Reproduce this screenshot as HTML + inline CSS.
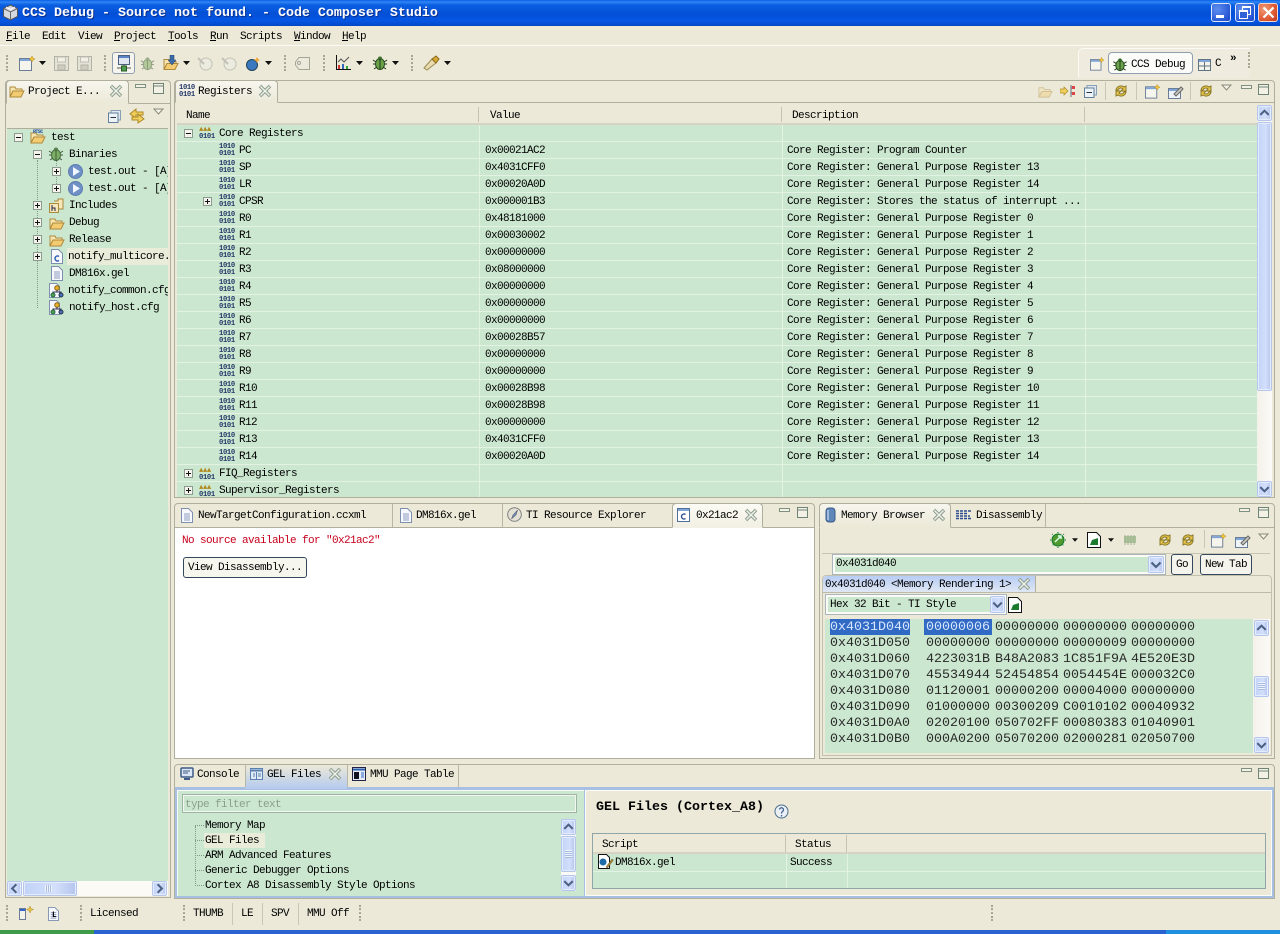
<!DOCTYPE html>
<html><head><meta charset="utf-8"><title>CCS Debug - Source not found. - Code Composer Studio</title>
<style>
html,body{margin:0;padding:0}
body{width:1280px;height:934px;position:relative;overflow:hidden;background:#ece9d8;font-family:"Liberation Mono","Noto Sans CJK SC",monospace;color:#000}
div,span,svg,b,i{position:absolute}
.t{white-space:pre;font-size:11px;line-height:14px;letter-spacing:-.6px;font-family:"Liberation Mono",monospace;margin-top:1px}
.t u{position:static}
.bin{font:bold 7.2px/6.500px "Liberation Mono",monospace;letter-spacing:-.35px;color:#26396a;white-space:pre;width:16px;height:13px;font-style:normal}
.r{left:177px;width:1080px;height:16px;background:#cbe7cf;border-bottom:1px solid #e3f2e3}
.p{border:1px solid #b0ae9c;border-radius:4px 4px 0 0;box-sizing:border-box;background:#ece9d8}
.g{background:#cbe7cf}
.grip{width:2px;border-left:2px dotted #a8a593}
.sb{background:linear-gradient(90deg,#c2d3f8,#d3dffb 60%,#b4c5ec);border:1px solid #b6c6ea;border-radius:2px;box-sizing:border-box;box-shadow:inset 0 0 0 1px #e4ecff}
.hex{white-space:pre;font-size:13.33px;line-height:16px;font-family:"Liberation Mono",monospace;color:#2a2a2a;margin-top:1px}
.tab{background:linear-gradient(#f7f6ee,#ece9d8);border:1px solid #b0ae9c;border-bottom:0;border-radius:4px 4px 0 0;box-sizing:border-box}
.sep{width:1px;background:#c9c6b3}
</style></head><body>
<svg width="0" height="0" style="left:0;top:0"><defs>
<symbol id="x" viewBox="0 0 14 14"><path d="M2 2l10 10M12 2L2 12" stroke="#8a9a8c" stroke-width="3.4" fill="none"/><path d="M2.5 2.5l9 9M11.5 2.500l-9 9" stroke="#eef2e8" stroke-width="1.5" fill="none"/></symbol>
<symbol id="min" viewBox="0 0 12 8"><rect x=".5" y="1.500" width="10" height="3" fill="#f3f1e6" stroke="#7f8f80"/></symbol>
<symbol id="max" viewBox="0 0 12 12"><rect x=".5" y=".5" width="10" height="10" fill="#f3f1e6" stroke="#6f8475"/><path d="M1 3h9" stroke="#6f8475"/></symbol>
<symbol id="menu" viewBox="0 0 12 8"><path d="M1 1h9L5.500 6z" fill="#f4f2e8" stroke="#8a8a78"/></symbol>
<symbol id="plus" viewBox="0 0 9 9"><rect x=".5" y=".5" width="8" height="8" fill="#f4f4ec" stroke="#8c9a90"/><path d="M2 4.500h5M4.500 2v5" stroke="#111"/></symbol>
<symbol id="minus" viewBox="0 0 9 9"><rect x=".5" y=".5" width="8" height="8" fill="#f4f4ec" stroke="#8c9a90"/><path d="M2 4.500h5" stroke="#111"/></symbol>
<symbol id="folder" viewBox="0 0 16 14"><path d="M1 3h5l1 2h6v2H4L1 13z" fill="#f7e5b0" stroke="#b08a3c"/><path d="M1 13l3-6h11l-3 6z" fill="#f3cb70" stroke="#b08a3c"/></symbol>
<symbol id="doc" viewBox="0 0 12 15"><path d="M.5.500h7l4 4v10H.5z" fill="#f8f9ff" stroke="#7d8fae"/><path d="M3 6h6M3 8h6M3 10h6M3 12h6" stroke="#8c9dbc"/></symbol>
<symbol id="cfg" viewBox="0 0 15 15"><path d="M.5.500h7l3 3v11H.5z" fill="#f8f9ff" stroke="#8090b0"/><circle cx="8" cy="5" r="2.300" fill="#e9b030" stroke="#8a6a10"/><path d="M8 7v2M4 11V9h8v2" stroke="#335" fill="none"/><circle cx="4" cy="12" r="2" fill="#50a050" stroke="#264"/><circle cx="12" cy="12" r="2" fill="#5070c0" stroke="#234"/></symbol>
<symbol id="play" viewBox="0 0 15 15"><circle cx="7.500" cy="7.500" r="7" fill="#6e90c6" stroke="#5d7cb0"/><path d="M5 3l7 4.500-7 4.500z" fill="#f0f4fc"/></symbol>
<symbol id="new" viewBox="0 0 17 15"><rect x=".5" y="2.500" width="12" height="12" fill="#f5f5ee" stroke="#6b7d96"/><path d="M1 3h11v2H1z" fill="#7fa4d6"/><path d="M13 0l1 2 2 1-2 1-1 2-1-2-2-1 2-1z" fill="#f1c63a" stroke="#b08a20" stroke-width=".5"/></symbol>
<symbol id="save" viewBox="0 0 15 15"><rect x=".5" y=".5" width="14" height="14" fill="#e4e2d4" stroke="#b3b2a6"/><rect x="3.500" y="1" width="8" height="5" fill="#f2f1e8" stroke="#c0bfb3"/><rect x="4" y="9" width="7" height="5" fill="#cfcdc0" stroke="#b3b2a6"/></symbol>
<symbol id="bug" viewBox="0 0 16 16"><ellipse cx="8" cy="9" rx="4.500" ry="5.500" fill="#6aa24a" stroke="#284c1e"/><circle cx="8" cy="3.500" r="2" fill="#3a6c2a"/><path d="M1 5l3 2M15 5l-3 2M1 9h3M15 9h-3M2 14l3-2M14 14l-3-2M8 4v10" stroke="#1e3a18"/></symbol>
<symbol id="sync" viewBox="0 0 16 16"><path d="M3 7a5 5 0 0 1 8-3l2-1v5H8l2-2a3 3 0 0 0-5 1z" fill="#e9c64a" stroke="#8c7a2a"/><path d="M13 9a5 5 0 0 1-8 3l-2 1V8h5l-2 2a3 3 0 0 0 5-1z" fill="#e9c64a" stroke="#8c7a2a"/></symbol>
<symbol id="swap" viewBox="0 0 16 16"><path d="M7 1L1 6l6 4V7h7V4H7z" fill="#f1cf5c" stroke="#ad8a26"/><path d="M9 6l6 5-6 4v-3H3V9h6z" fill="#f1cf5c" stroke="#ad8a26"/></symbol>
<symbol id="collapse" viewBox="0 0 13 13"><rect x="3" y=".5" width="9.500" height="9.500" fill="#dfe7f0" stroke="#88a0b4"/><rect x=".5" y="3" width="9.500" height="9.500" fill="#eef3f8" stroke="#5f7f9a"/><path d="M2.500 7.500h5.500" stroke="#234"/></symbol>
<symbol id="chip" viewBox="0 0 16 12"><rect x="2" y="2" width="12" height="7" fill="#4f8a3f"/><path d="M3 1v10M6 1v10M9 1v10M12 1v10" stroke="#2e5e24"/></symbol>
<symbol id="memdoc" viewBox="0 0 14 16"><path d="M.5.500h9l4 4v11H.5z" fill="#fff" stroke="#111"/><path d="M3 13l2-5 6-2v7z" fill="#1c7a2e"/></symbol>
<symbol id="up" viewBox="0 0 16 16"><path d="M3.500 10L8 5.500l4.500 4.500" fill="none" stroke="#4d6185" stroke-width="2.200"/></symbol>
<symbol id="dn" viewBox="0 0 16 16"><path d="M3.500 6L8 10.500 12.500 6" fill="none" stroke="#4d6185" stroke-width="2.200"/></symbol>
<symbol id="lf" viewBox="0 0 16 16"><path d="M10 3.500L5.500 8l4.500 4.500" fill="none" stroke="#4d6185" stroke-width="2.200"/></symbol>
<symbol id="rt" viewBox="0 0 16 16"><path d="M6 3.500L10.500 8 6 12.500" fill="none" stroke="#4d6185" stroke-width="2.200"/></symbol>
<symbol id="arr" viewBox="0 0 7 4"><path d="M0 0h7L3.500 4z" fill="#111"/></symbol>
<symbol id="persp" viewBox="0 0 15 14"><rect x=".5" y="2.500" width="12" height="11" fill="#f4f3ea" stroke="#5f7382"/><path d="M1 3h11v2H1z" fill="#7fa4d6"/><path d="M6.500 5v8M1 9h11" stroke="#5f7382"/></symbol>
<symbol id="pin" viewBox="0 0 16 15"><rect x=".5" y="4.500" width="12" height="10" fill="#eef3f8" stroke="#6b7d96"/><path d="M1 5h11v2H1z" fill="#7fa4d6"/><path d="M6 10l7-7 2 2-7 7z" fill="#c9c9c0" stroke="#666"/></symbol>
</defs></svg>

<!-- title bar -->
<div style="left:0;top:0;width:1280px;height:26px;background:linear-gradient(#0a5fe6 0,#2f86f5 2px,#0a5fe0 5px,#0450d8 14px,#0556e4 21px,#0347c4 26px)"></div>
<svg style="left:2px;top:4px" width="17" height="17" viewBox="0 0 17 17"><path d="M8.500 1l7 3.500v8l-7 3.500-7-3.500v-8z" fill="#d7d9e0" stroke="#555"/><path d="M1.500 4.500l7 3.500 7-3.500M8.500 8v8" stroke="#666" fill="none"/><path d="M4 3l4.500 2.500L13 3" stroke="#fff" fill="none"/></svg>
<div class="t" style="left:22px;top:5px;font:bold 13.33px/16px 'Liberation Mono',monospace;letter-spacing:0;color:#fff;text-shadow:1px 1px 0 #0a2f8c">CCS Debug - Source not found. - Code Composer Studio</div>
<div style="left:1211px;top:3px;width:20px;height:19px;border:1px solid #dce6fa;border-radius:3px;box-sizing:border-box;background:radial-gradient(circle at 30% 30%,#5f8ef0,#2a5bd6 70%,#1c48c0)"><b style="left:4px;top:11px;width:8px;height:3px;background:#fff"></b></div>
<div style="left:1235px;top:3px;width:20px;height:19px;border:1px solid #dce6fa;border-radius:3px;box-sizing:border-box;background:radial-gradient(circle at 30% 30%,#5f8ef0,#2a5bd6 70%,#1c48c0)"><b style="left:6px;top:2px;width:7px;height:6px;border:1px solid #fff;border-top-width:2px"></b><b style="left:3px;top:6px;width:7px;height:6px;border:1px solid #fff;border-top-width:2px;background:#2f62d8"></b></div>
<div style="left:1258px;top:3px;width:20px;height:19px;border:1px solid #f0d8d0;border-radius:3px;box-sizing:border-box;background:radial-gradient(circle at 30% 30%,#f09a78,#de5a32 60%,#c0381c)"><svg style="left:3px;top:2px" width="13" height="13" viewBox="0 0 13 13"><path d="M1.500 1.500l10 10M11.500 1.500l-10 10" stroke="#fff" stroke-width="2.200"/></svg></div>

<!-- menu -->
<div class="t" style="left:6px;top:29px"><u>F</u>ile</div>
<div class="t" style="left:42px;top:29px">Edit</div>
<div class="t" style="left:78px;top:29px">View</div>
<div class="t" style="left:114px;top:29px"><u>P</u>roject</div>
<div class="t" style="left:168px;top:29px"><u>T</u>ools</div>
<div class="t" style="left:210px;top:29px"><u>R</u>un</div>
<div class="t" style="left:240px;top:29px">Scripts</div>
<div class="t" style="left:294px;top:29px"><u>W</u>indow</div>
<div class="t" style="left:342px;top:29px"><u>H</u>elp</div>
<div style="left:0;top:45px;width:1280px;height:1px;background:#fbfaf4"></div>

<!-- main toolbar -->
<div class="grip" style="left:6px;top:55px;height:16px"></div>
<svg style="left:19px;top:56px" width="17" height="15"><use href="#new"/></svg>
<svg style="left:39px;top:61px" width="7" height="4"><use href="#arr"/></svg>
<svg style="left:54px;top:56px" width="15" height="15"><use href="#save"/></svg>
<svg style="left:77px;top:56px" width="15" height="15"><use href="#save"/></svg>
<div class="grip" style="left:104px;top:55px;height:16px"></div>
<div style="left:112px;top:52px;width:23px;height:22px;border:1px solid #8f9fb0;border-radius:3px;box-sizing:border-box;background:#f5f5ee"></div>
<svg style="left:117px;top:55px" width="14" height="17" viewBox="0 0 14 17"><rect x="1.500" y=".5" width="11" height="9" fill="#dfe6f2" stroke="#4a5f82"/><path d="M2 2h10" stroke="#5a84c4" stroke-width="2"/><path d="M7 9v3M0 13h14" stroke="#555"/><rect x="4.500" y="11" width="5" height="5" fill="#4f9a4f" stroke="#245a24"/></svg>
<svg style="left:140px;top:56px" width="15" height="15" opacity=".45"><use href="#bug"/></svg>
<svg style="left:163px;top:56px" width="16" height="15"><use href="#folder"/></svg>
<svg style="left:168px;top:55px" width="8" height="10" viewBox="0 0 8 10"><path d="M2 0h4v5h2L4 10 0 5h2z" fill="#3c6ca8" stroke="#1d3a66" stroke-width=".5"/></svg>
<svg style="left:183px;top:61px" width="7" height="4"><use href="#arr"/></svg>
<svg style="left:197px;top:56px" width="16" height="15" opacity=".4" viewBox="0 0 16 15"><circle cx="9" cy="8" r="6" fill="#eee" stroke="#888"/><path d="M1 2l6 6" stroke="#888" stroke-width="2"/></svg>
<svg style="left:221px;top:56px" width="16" height="15" opacity=".4" viewBox="0 0 16 15"><circle cx="9" cy="8" r="6" fill="#eee" stroke="#888"/><path d="M1 2l6 6" stroke="#888" stroke-width="2"/></svg>
<svg style="left:246px;top:56px" width="15" height="15" viewBox="0 0 15 15"><circle cx="6" cy="9" r="5.500" fill="#3a78c0" stroke="#245"/><path d="M11 1l1 2 2 1-2 1-1 2-1-2-2-1 2-1z" fill="#f1a83a"/></svg>
<svg style="left:265px;top:61px" width="7" height="4"><use href="#arr"/></svg>
<div class="grip" style="left:284px;top:55px;height:16px"></div>
<svg style="left:295px;top:57px" width="15" height="13" viewBox="0 0 15 13"><path d="M4 .5h10.500v12H4L.5 8V5z" fill="#eceadc" stroke="#a5a596"/><circle cx="4" cy="6" r="1.500" fill="none" stroke="#a5a596"/></svg>
<div class="grip" style="left:323px;top:55px;height:16px"></div>
<svg style="left:336px;top:55px" width="15" height="15" viewBox="0 0 15 15"><path d="M.5 0v14.500H15" fill="none" stroke="#111"/><path d="M2 7l3-3 3 3 5-5" fill="none" stroke="#555"/><path d="M3 10v4" stroke="#c33" stroke-width="2"/><path d="M7 9v5" stroke="#36b" stroke-width="2"/><path d="M11 11v3" stroke="#3a3" stroke-width="2"/></svg>
<svg style="left:356px;top:61px" width="7" height="4"><use href="#arr"/></svg>
<svg style="left:372px;top:55px" width="16" height="16"><use href="#bug"/></svg>
<svg style="left:392px;top:61px" width="7" height="4"><use href="#arr"/></svg>
<div class="grip" style="left:411px;top:55px;height:16px"></div>
<svg style="left:423px;top:55px" width="17" height="16" viewBox="0 0 17 16"><path d="M1 13l8-9 4 4-9 7z" fill="#e8dcb0" stroke="#9c8a50"/><path d="M9 4l4-3 3 3-3 4z" fill="#d8a838" stroke="#8a6a18"/></svg>
<svg style="left:444px;top:61px" width="7" height="4"><use href="#arr"/></svg>

<!-- perspective bar -->
<div style="left:1078px;top:48px;width:172px;height:30px;background:#efecdf;border-radius:5px 0 0 0;border-top:1px solid #fbfaf4;border-left:1px solid #fbfaf4;box-sizing:border-box"></div>
<svg style="left:1090px;top:57px" width="15" height="14"><use href="#new"/></svg>
<div style="left:1108px;top:52px;width:85px;height:22px;background:#fbfbf7;border:1px solid #8f9fb0;border-radius:4px;box-sizing:border-box"></div>
<svg style="left:1112px;top:57px" width="16" height="15"><use href="#bug"/></svg>
<div class="t" style="left:1131px;top:57px">CCS Debug</div>
<svg style="left:1198px;top:57px" width="15" height="14"><use href="#persp"/></svg>
<div class="t" style="left:1215px;top:56px">C</div>
<div class="t" style="left:1230px;top:51px;font-weight:bold">»</div>
<div class="grip" style="left:1248px;top:52px;height:16px"></div>

<!-- left panel -->
<div class="p" style="left:5px;top:80px;width:166px;height:818px"></div>
<div style="left:6px;top:103px;width:164px;height:1px;background:#b0ae9c"></div>
<div class="tab" style="left:6px;top:80px;width:123px;height:24px;border-bottom:1px solid #ece9d8"></div>
<svg style="left:9px;top:84px" width="16" height="14"><use href="#folder"/></svg>
<div class="t" style="left:28px;top:84px">Project E...</div>
<svg style="left:109px;top:84px" width="14" height="14"><use href="#x"/></svg>
<svg style="left:135px;top:83px" width="12" height="8"><use href="#min"/></svg>
<svg style="left:153px;top:83px" width="12" height="12"><use href="#max"/></svg>
<svg style="left:108px;top:110px" width="13" height="13"><use href="#collapse"/></svg>
<svg style="left:129px;top:108px" width="16" height="16"><use href="#swap"/></svg>
<svg style="left:153px;top:108px" width="12" height="8"><use href="#menu"/></svg>
<div style="left:7px;top:128px;width:161px;height:1px;background:#b0ae9b"></div>
<div class="g" style="left:7px;top:129px;width:161px;height:752px"></div>
<div style="left:37px;top:160px;height:148px;width:0;border-left:1px dotted #7f9a85"></div>
<div style="left:56px;top:160px;height:28px;width:0;border-left:1px dotted #7f9a85"></div>
<div style="left:67px;top:248px;width:101px;height:17px;background:#e9ecd9"></div>
<svg style="left:14px;top:133px" width="9" height="9"><use href="#minus"/></svg>
<svg style="left:30px;top:130px" width="16" height="14"><use href="#folder"/></svg>
<div class="t" style="left:33px;top:128px;font:bold 5px/6px 'Liberation Mono',monospace;color:#2b4f9f">RTSC</div>
<div class="t" style="left:51px;top:130px">test</div>
<svg style="left:33px;top:150px" width="9" height="9"><use href="#minus"/></svg>
<svg style="left:48px;top:146px" width="16" height="16" opacity=".8"><use href="#bug"/></svg>
<div class="t" style="left:69px;top:147px">Binaries</div>
<svg style="left:52px;top:167px" width="9" height="9"><use href="#plus"/></svg>
<svg style="left:68px;top:164px" width="15" height="15"><use href="#play"/></svg>
<div style="left:88px;top:164px;width:80px;height:16px;overflow:hidden"><span class="t" style="left:0;top:0">test.out - [A]</span></div>
<svg style="left:52px;top:184px" width="9" height="9"><use href="#plus"/></svg>
<svg style="left:68px;top:181px" width="15" height="15"><use href="#play"/></svg>
<div style="left:88px;top:181px;width:80px;height:16px;overflow:hidden"><span class="t" style="left:0;top:0">test.out - [A]</span></div>
<svg style="left:33px;top:201px" width="9" height="9"><use href="#plus"/></svg>
<svg style="left:49px;top:198px" width="15" height="15" viewBox="0 0 15 15"><path d="M5 3h4v-2h5v10h-4" fill="#f6e6b8" stroke="#a88a40"/><rect x=".5" y="5.500" width="9" height="9" fill="#f6e6b8" stroke="#a88a40"/><path d="M3 7v6M3 10h3v3" stroke="#224" fill="none"/></svg>
<div class="t" style="left:69px;top:198px">Includes</div>
<svg style="left:33px;top:218px" width="9" height="9"><use href="#plus"/></svg>
<svg style="left:49px;top:216px" width="16" height="14"><use href="#folder"/></svg>
<div class="t" style="left:69px;top:215px">Debug</div>
<svg style="left:33px;top:235px" width="9" height="9"><use href="#plus"/></svg>
<svg style="left:49px;top:233px" width="16" height="14"><use href="#folder"/></svg>
<div class="t" style="left:69px;top:232px">Release</div>
<svg style="left:33px;top:252px" width="9" height="9"><use href="#plus"/></svg>
<svg style="left:51px;top:249px" width="12" height="15" viewBox="0 0 12 15"><path d="M.5.500h7l4 4v10H.5z" fill="#f8f9ff" stroke="#7d8fae"/><path d="M8 7.500a2.500 2.500 0 1 0 0 4" fill="none" stroke="#2b5fae" stroke-width="1.500"/></svg>
<div style="left:68px;top:249px;width:100px;height:16px;overflow:hidden"><span class="t" style="left:0;top:0">notify_multicore.c</span></div>
<svg style="left:51px;top:266px" width="12" height="15"><use href="#doc"/></svg>
<div class="t" style="left:69px;top:266px">DM816x.gel</div>
<svg style="left:49px;top:283px" width="15" height="15"><use href="#cfg"/></svg>
<div style="left:68px;top:283px;width:100px;height:16px;overflow:hidden"><span class="t" style="left:0;top:0">notify_common.cfg</span></div>
<svg style="left:49px;top:300px" width="15" height="15"><use href="#cfg"/></svg>
<div class="t" style="left:69px;top:300px">notify_host.cfg</div>
<div style="left:7px;top:881px;width:161px;height:15px;background:#fbfaf7"></div>
<div class="sb" style="left:7px;top:881px;width:15px;height:15px"></div><svg style="left:7px;top:881px" width="15" height="15"><use href="#lf"/></svg>
<div class="sb" style="left:23px;top:881px;width:54px;height:15px"></div>
<div style="left:45px;top:885px;width:7px;height:7px;background:repeating-linear-gradient(90deg,#f0f4ff 0 1px,#a8bbe0 1px 2px)"></div>
<div class="sb" style="left:152px;top:881px;width:15px;height:15px"></div><svg style="left:152px;top:881px" width="15" height="15"><use href="#rt"/></svg>

<!-- registers panel -->
<div class="p" style="left:174px;top:80px;width:1101px;height:418px"></div>
<div style="left:175px;top:102px;width:1099px;height:1px;background:#b0ae9c"></div>
<div class="tab" style="left:175px;top:80px;width:103px;height:23px;border-bottom:1px solid #ece9d8"></div>
<i class="bin" style="left:179px;top:85px">1010
0101</i>
<div class="t" style="left:198px;top:84px">Registers</div>
<svg style="left:258px;top:84px" width="14" height="14"><use href="#x"/></svg>
<!-- reg toolbar -->
<svg style="left:1038px;top:84px" width="15" height="15" opacity=".4"><use href="#folder"/></svg>
<svg style="left:1060px;top:84px" width="16" height="14" viewBox="0 0 16 14"><path d="M0 5h4V3l4 4-4 4V9H0z" fill="#f1cf5c" stroke="#ad8a26" stroke-width=".7"/><path d="M11 1v12M11 4h4M11 9h4" stroke="#667"/><rect x="12" y="2" width="3" height="3" fill="#d44"/><rect x="12" y="8" width="3" height="3" fill="#d44"/></svg>
<svg style="left:1084px;top:85px" width="13" height="13"><use href="#collapse"/></svg>
<div class="sep" style="left:1105px;top:82px;height:18px"></div>
<svg style="left:1113px;top:83px" width="16" height="16"><use href="#sync"/></svg>
<div class="sep" style="left:1136px;top:82px;height:18px"></div>
<svg style="left:1145px;top:84px" width="16" height="15"><use href="#new"/></svg>
<svg style="left:1168px;top:84px" width="16" height="15"><use href="#pin"/></svg>
<div class="sep" style="left:1190px;top:82px;height:18px"></div>
<svg style="left:1198px;top:83px" width="16" height="16"><use href="#sync"/></svg>
<svg style="left:1221px;top:84px" width="12" height="8"><use href="#menu"/></svg>
<svg style="left:1241px;top:84px" width="12" height="8"><use href="#min"/></svg>
<svg style="left:1258px;top:84px" width="12" height="12"><use href="#max"/></svg>
<!-- reg header -->
<div style="left:177px;top:123px;width:1080px;height:2px;background:#d6d3c2"></div>
<div class="t" style="left:186px;top:108px">Name</div>
<div class="t" style="left:490px;top:108px">Value</div>
<div class="t" style="left:792px;top:108px">Description</div>
<div style="left:478px;top:107px;width:1px;height:15px;background:#c6c3b0"></div>
<div style="left:781px;top:107px;width:1px;height:15px;background:#c6c3b0"></div>
<div style="left:1084px;top:107px;width:1px;height:15px;background:#c6c3b0"></div>
<!-- rows -->
<div class="r" style="top:125px"></div><div class="r" style="top:142px"></div><div class="r" style="top:159px"></div><div class="r" style="top:176px"></div><div class="r" style="top:193px"></div><div class="r" style="top:210px"></div><div class="r" style="top:227px"></div><div class="r" style="top:244px"></div><div class="r" style="top:261px"></div><div class="r" style="top:278px"></div><div class="r" style="top:295px"></div><div class="r" style="top:312px"></div><div class="r" style="top:329px"></div><div class="r" style="top:346px"></div><div class="r" style="top:363px"></div><div class="r" style="top:380px"></div><div class="r" style="top:397px"></div><div class="r" style="top:414px"></div><div class="r" style="top:431px"></div><div class="r" style="top:448px"></div><div class="r" style="top:465px"></div><div class="r" style="top:482px;height:15px;border:0"></div>
<div style="left:479px;top:125px;width:1px;height:372px;background:#e3f2e3"></div>
<div style="left:782px;top:125px;width:1px;height:372px;background:#e3f2e3"></div>
<div style="left:1085px;top:125px;width:1px;height:372px;background:#e3f2e3"></div>

<svg style="left:184px;top:129px" width="9" height="9"><use href="#minus"/></svg>
<i class="bin" style="left:199px;top:127px;color:#26396a"><span style="position:static;color:#b08a20">&#9650;&#9650;&#9650;</span>
0101</i>
<div class="t" style="left:219px;top:126px">Core Registers</div>

<i class="bin" style="left:219px;top:144px">1010
0101</i><div class="t" style="left:239px;top:143px">PC</div><div class="t" style="left:485px;top:143px">0x00021AC2</div><div class="t" style="left:787px;top:143px">Core Register: Program Counter</div>
<i class="bin" style="left:219px;top:161px">1010
0101</i><div class="t" style="left:239px;top:160px">SP</div><div class="t" style="left:485px;top:160px">0x4031CFF0</div><div class="t" style="left:787px;top:160px">Core Register: General Purpose Register 13</div>
<i class="bin" style="left:219px;top:178px">1010
0101</i><div class="t" style="left:239px;top:177px">LR</div><div class="t" style="left:485px;top:177px">0x00020A0D</div><div class="t" style="left:787px;top:177px">Core Register: General Purpose Register 14</div>
<svg style="left:203px;top:197px" width="9" height="9"><use href="#plus"/></svg>
<i class="bin" style="left:219px;top:195px">1010
0101</i><div class="t" style="left:239px;top:194px">CPSR</div><div class="t" style="left:485px;top:194px">0x000001B3</div><div class="t" style="left:787px;top:194px">Core Register: Stores the status of interrupt ...</div>
<i class="bin" style="left:219px;top:212px">1010
0101</i><div class="t" style="left:239px;top:211px">R0</div><div class="t" style="left:485px;top:211px">0x48181000</div><div class="t" style="left:787px;top:211px">Core Register: General Purpose Register 0</div>
<i class="bin" style="left:219px;top:229px">1010
0101</i><div class="t" style="left:239px;top:228px">R1</div><div class="t" style="left:485px;top:228px">0x00030002</div><div class="t" style="left:787px;top:228px">Core Register: General Purpose Register 1</div>
<i class="bin" style="left:219px;top:246px">1010
0101</i><div class="t" style="left:239px;top:245px">R2</div><div class="t" style="left:485px;top:245px">0x00000000</div><div class="t" style="left:787px;top:245px">Core Register: General Purpose Register 2</div>
<i class="bin" style="left:219px;top:263px">1010
0101</i><div class="t" style="left:239px;top:262px">R3</div><div class="t" style="left:485px;top:262px">0x08000000</div><div class="t" style="left:787px;top:262px">Core Register: General Purpose Register 3</div>
<i class="bin" style="left:219px;top:280px">1010
0101</i><div class="t" style="left:239px;top:279px">R4</div><div class="t" style="left:485px;top:279px">0x00000000</div><div class="t" style="left:787px;top:279px">Core Register: General Purpose Register 4</div>
<i class="bin" style="left:219px;top:297px">1010
0101</i><div class="t" style="left:239px;top:296px">R5</div><div class="t" style="left:485px;top:296px">0x00000000</div><div class="t" style="left:787px;top:296px">Core Register: General Purpose Register 5</div>
<i class="bin" style="left:219px;top:314px">1010
0101</i><div class="t" style="left:239px;top:313px">R6</div><div class="t" style="left:485px;top:313px">0x00000000</div><div class="t" style="left:787px;top:313px">Core Register: General Purpose Register 6</div>
<i class="bin" style="left:219px;top:331px">1010
0101</i><div class="t" style="left:239px;top:330px">R7</div><div class="t" style="left:485px;top:330px">0x00028B57</div><div class="t" style="left:787px;top:330px">Core Register: General Purpose Register 7</div>
<i class="bin" style="left:219px;top:348px">1010
0101</i><div class="t" style="left:239px;top:347px">R8</div><div class="t" style="left:485px;top:347px">0x00000000</div><div class="t" style="left:787px;top:347px">Core Register: General Purpose Register 8</div>
<i class="bin" style="left:219px;top:365px">1010
0101</i><div class="t" style="left:239px;top:364px">R9</div><div class="t" style="left:485px;top:364px">0x00000000</div><div class="t" style="left:787px;top:364px">Core Register: General Purpose Register 9</div>
<i class="bin" style="left:219px;top:382px">1010
0101</i><div class="t" style="left:239px;top:381px">R10</div><div class="t" style="left:485px;top:381px">0x00028B98</div><div class="t" style="left:787px;top:381px">Core Register: General Purpose Register 10</div>
<i class="bin" style="left:219px;top:399px">1010
0101</i><div class="t" style="left:239px;top:398px">R11</div><div class="t" style="left:485px;top:398px">0x00028B98</div><div class="t" style="left:787px;top:398px">Core Register: General Purpose Register 11</div>
<i class="bin" style="left:219px;top:416px">1010
0101</i><div class="t" style="left:239px;top:415px">R12</div><div class="t" style="left:485px;top:415px">0x00000000</div><div class="t" style="left:787px;top:415px">Core Register: General Purpose Register 12</div>
<i class="bin" style="left:219px;top:433px">1010
0101</i><div class="t" style="left:239px;top:432px">R13</div><div class="t" style="left:485px;top:432px">0x4031CFF0</div><div class="t" style="left:787px;top:432px">Core Register: General Purpose Register 13</div>
<i class="bin" style="left:219px;top:450px">1010
0101</i><div class="t" style="left:239px;top:449px">R14</div><div class="t" style="left:485px;top:449px">0x00020A0D</div><div class="t" style="left:787px;top:449px">Core Register: General Purpose Register 14</div>
<svg style="left:184px;top:469px" width="9" height="9"><use href="#plus"/></svg>
<i class="bin" style="left:199px;top:468px"><span style="position:static;color:#b08a20">&#9650;&#9650;&#9650;</span>
0101</i><div class="t" style="left:219px;top:466px">FIQ_Registers</div>
<svg style="left:184px;top:486px" width="9" height="9"><use href="#plus"/></svg>
<i class="bin" style="left:199px;top:485px"><span style="position:static;color:#b08a20">&#9650;&#9650;&#9650;</span>
0101</i><div class="t" style="left:219px;top:483px">Supervisor_Registers</div>
<!-- reg scrollbar -->
<div style="left:1257px;top:105px;width:15px;height:392px;background:linear-gradient(90deg,#f3f1e9,#fbfaf7)"></div>
<div class="sb" style="left:1257px;top:105px;width:15px;height:16px"></div><svg style="left:1257px;top:105px" width="15" height="16"><use href="#up"/></svg>
<div class="sb" style="left:1257px;top:122px;width:15px;height:269px"></div>
<div class="sb" style="left:1257px;top:481px;width:15px;height:16px"></div><svg style="left:1257px;top:481px" width="15" height="16"><use href="#dn"/></svg>

<!-- editor panel -->
<div class="p" style="left:174px;top:503px;width:641px;height:256px"></div>
<div style="left:175px;top:527px;width:639px;height:231px;background:#fff;border-top:1px solid #b0ae9c;box-sizing:border-box"></div>
<div style="left:392px;top:504px;width:1px;height:23px;background:#b8b6a4"></div>
<div style="left:502px;top:504px;width:1px;height:23px;background:#b8b6a4"></div>
<div class="tab" style="left:672px;top:503px;width:91px;height:25px;border-bottom:1px solid #f3f1e6;background:linear-gradient(#fbfaf4,#f2f0e4)"></div>
<svg style="left:181px;top:508px" width="12" height="15"><use href="#doc"/></svg>
<div class="t" style="left:198px;top:508px">NewTargetConfiguration.ccxml</div>
<svg style="left:400px;top:508px" width="12" height="15"><use href="#doc"/></svg>
<div class="t" style="left:416px;top:508px">DM816x.gel</div>
<svg style="left:507px;top:507px" width="15" height="15" viewBox="0 0 15 15"><circle cx="7.500" cy="7.500" r="6.800" fill="#e5e2d5" stroke="#7d7f82"/><path d="M10.500 3L6 8l-1.500 4L9 8z" fill="#6f8fb8" stroke="#445"  stroke-width=".5"/></svg>
<div class="t" style="left:526px;top:508px">TI Resource Explorer</div>
<svg style="left:677px;top:508px" width="13" height="14" viewBox="0 0 13 14"><rect x=".5" y=".5" width="12" height="13" fill="#fff" stroke="#4f6f9a"/><path d="M1 2h11" stroke="#7fa4d6" stroke-width="2"/><path d="M8.500 6.500a2.500 2.500 0 1 0 0 4" fill="none" stroke="#2b4f8e" stroke-width="1.400"/></svg>
<div class="t" style="left:696px;top:508px">0x21ac2</div>
<svg style="left:744px;top:508px" width="14" height="14"><use href="#x"/></svg>
<svg style="left:779px;top:507px" width="12" height="8"><use href="#min"/></svg>
<svg style="left:797px;top:507px" width="12" height="12"><use href="#max"/></svg>
<div class="t" style="left:182px;top:533px;color:#c8001c">No source available for "0x21ac2"</div>
<div style="left:183px;top:557px;width:124px;height:21px;background:#f7f6ee;border:1px solid #33485e;border-radius:3px;box-sizing:border-box"></div>
<div class="t" style="left:188px;top:560px">View Disassembly...</div>

<!-- memory panel -->
<div class="p" style="left:819px;top:503px;width:456px;height:256px"></div>
<div style="left:820px;top:527px;width:454px;height:1px;background:#b0ae9c"></div>
<div class="tab" style="left:819px;top:503px;width:132px;height:25px;border-bottom:1px solid #ece9d8"></div>
<div style="left:1045px;top:504px;width:1px;height:23px;background:#b8b6a4"></div>
<svg style="left:825px;top:507px" width="11" height="16" viewBox="0 0 11 16"><rect x="1" y="1" width="9" height="14" rx="3" fill="#5f86b8" stroke="#3a5a88"/><path d="M3 3v10" stroke="#b5cbe6" stroke-width="1.500"/></svg>
<div class="t" style="left:841px;top:508px">Memory Browser</div>
<svg style="left:932px;top:508px" width="14" height="14"><use href="#x"/></svg>
<svg style="left:956px;top:510px" width="16" height="10" viewBox="0 0 16 10"><path d="M0 1h16M0 3.500h12M0 6h14M0 8.500h16" stroke="#2d4a8e" stroke-width="1.500" stroke-dasharray="3 1"/></svg>
<div class="t" style="left:976px;top:508px">Disassembly</div>
<svg style="left:1239px;top:507px" width="12" height="8"><use href="#min"/></svg>
<svg style="left:1258px;top:507px" width="12" height="12"><use href="#max"/></svg>
<svg style="left:1050px;top:532px" width="16" height="16" viewBox="0 0 16 16"><circle cx="8" cy="8" r="6" fill="#4f9a2e" stroke="#173"/><path d="M5 10l5-5M8 4h3v3" stroke="#dfe" fill="none" stroke-width="1.500"/><path d="M8 0v16M0 8h16M2 2l12 12M14 2L2 14" stroke="#173" stroke-dasharray="1 14"/></svg>
<svg style="left:1072px;top:538px" width="6" height="4"><use href="#arr"/></svg>
<svg style="left:1087px;top:532px" width="14" height="16"><use href="#memdoc"/></svg>
<svg style="left:1108px;top:538px" width="6" height="4"><use href="#arr"/></svg>
<svg style="left:1122px;top:534px" width="16" height="12" opacity=".4"><use href="#chip"/></svg>
<svg style="left:1157px;top:532px" width="16" height="16"><use href="#sync"/></svg>
<svg style="left:1180px;top:532px" width="16" height="16"><use href="#sync"/></svg>
<div class="sep" style="left:1204px;top:530px;height:18px"></div>
<svg style="left:1211px;top:533px" width="16" height="15"><use href="#new"/></svg>
<svg style="left:1235px;top:533px" width="16" height="15"><use href="#pin"/></svg>
<svg style="left:1258px;top:533px" width="12" height="8"><use href="#menu"/></svg>
<div style="left:822px;top:553px;width:448px;height:1px;background:#c8c5b2"></div>
<div class="g" style="left:833px;top:555px;width:332px;height:19px;border:2px solid #fbfbf6;outline:1px solid #a9b5bf;box-sizing:border-box"></div>
<div class="sb" style="left:1148px;top:556px;width:16px;height:17px"></div><svg style="left:1148px;top:556px" width="16" height="17"><use href="#dn"/></svg>
<div class="t" style="left:836px;top:556px">0x4031d040</div>
<div style="left:1171px;top:554px;width:22px;height:21px;background:#f5f4ec;border:1px solid #33485e;border-radius:3px;box-sizing:border-box"></div>
<div class="t" style="left:1176px;top:557px">Go</div>
<div style="left:1200px;top:554px;width:52px;height:21px;background:#f5f4ec;border:1px solid #33485e;border-radius:3px;box-sizing:border-box"></div>
<div class="t" style="left:1205px;top:557px">New Tab</div>
<div class="p" style="left:822px;top:575px;width:450px;height:181px;border-color:#c3c1ae"></div>
<div style="left:823px;top:576px;width:213px;height:16px;background:linear-gradient(#b8cdf4,#dfe7f3);border-right:1px solid #b0ae9c;box-sizing:border-box;border-radius:4px 0 0 0"></div>
<div style="left:823px;top:592px;width:448px;height:1px;background:#bdbba8"></div>
<div class="t" style="left:825px;top:577px">0x4031d040 &lt;Memory Rendering 1&gt;</div>
<svg style="left:1017px;top:577px" width="14" height="14"><use href="#x"/></svg>
<div class="g" style="left:826px;top:595px;width:180px;height:19px;border:2px solid #fbfbf6;outline:1px solid #a9b5bf;box-sizing:border-box"></div>
<div class="sb" style="left:990px;top:596px;width:15px;height:17px"></div><svg style="left:990px;top:596px" width="15" height="17"><use href="#dn"/></svg>
<div class="t" style="left:830px;top:597px">Hex 32 Bit - TI Style</div>
<svg style="left:1008px;top:597px" width="14" height="16"><use href="#memdoc"/></svg>
<div class="g" style="left:825px;top:619px;width:428px;height:134px"></div>
<div style="left:830px;top:619px;width:80px;height:16px;background:#316ac5"></div>
<div style="left:924px;top:619px;width:68px;height:16px;background:#316ac5"></div>
<div class="hex" style="left:830px;top:619px;color:#d8e6ff">0x4031D040</div>
<div class="hex" style="left:926px;top:619px;color:#d8e6ff">00000006</div>
<div class="hex" style="left:995px;top:619px">00000000</div><div class="hex" style="left:1063px;top:619px">00000000</div><div class="hex" style="left:1131px;top:619px">00000000</div>
<div class="hex" style="left:830px;top:635px">0x4031D050</div><div class="hex" style="left:926px;top:635px">00000000</div><div class="hex" style="left:995px;top:635px">00000000</div><div class="hex" style="left:1063px;top:635px">00000009</div><div class="hex" style="left:1131px;top:635px">00000000</div>
<div class="hex" style="left:830px;top:651px">0x4031D060</div><div class="hex" style="left:926px;top:651px">4223031B</div><div class="hex" style="left:995px;top:651px">B48A2083</div><div class="hex" style="left:1063px;top:651px">1C851F9A</div><div class="hex" style="left:1131px;top:651px">4E520E3D</div>
<div class="hex" style="left:830px;top:667px">0x4031D070</div><div class="hex" style="left:926px;top:667px">45534944</div><div class="hex" style="left:995px;top:667px">52454854</div><div class="hex" style="left:1063px;top:667px">0054454E</div><div class="hex" style="left:1131px;top:667px">000032C0</div>
<div class="hex" style="left:830px;top:683px">0x4031D080</div><div class="hex" style="left:926px;top:683px">01120001</div><div class="hex" style="left:995px;top:683px">00000200</div><div class="hex" style="left:1063px;top:683px">00004000</div><div class="hex" style="left:1131px;top:683px">00000000</div>
<div class="hex" style="left:830px;top:699px">0x4031D090</div><div class="hex" style="left:926px;top:699px">01000000</div><div class="hex" style="left:995px;top:699px">00300209</div><div class="hex" style="left:1063px;top:699px">C0010102</div><div class="hex" style="left:1131px;top:699px">00040932</div>
<div class="hex" style="left:830px;top:715px">0x4031D0A0</div><div class="hex" style="left:926px;top:715px">02020100</div><div class="hex" style="left:995px;top:715px">050702FF</div><div class="hex" style="left:1063px;top:715px">00080383</div><div class="hex" style="left:1131px;top:715px">01040901</div>
<div class="hex" style="left:830px;top:731px">0x4031D0B0</div><div class="hex" style="left:926px;top:731px">000A0200</div><div class="hex" style="left:995px;top:731px">05070200</div><div class="hex" style="left:1063px;top:731px">02000281</div><div class="hex" style="left:1131px;top:731px">02050700</div>
<div style="left:1253px;top:619px;width:17px;height:134px;background:linear-gradient(90deg,#f3f1e9,#fbfaf7)"></div>
<div class="sb" style="left:1254px;top:620px;width:15px;height:16px"></div><svg style="left:1254px;top:620px" width="15" height="16"><use href="#up"/></svg>
<div class="sb" style="left:1254px;top:676px;width:15px;height:21px"></div>
<div style="left:1258px;top:682px;width:7px;height:8px;background:repeating-linear-gradient(#f0f4ff 0 1px,#a8bbe0 1px 2px)"></div>
<div class="sb" style="left:1254px;top:737px;width:15px;height:16px"></div><svg style="left:1254px;top:737px" width="15" height="16"><use href="#dn"/></svg>

<!-- bottom panel -->
<div class="p" style="left:174px;top:764px;width:1101px;height:135px"></div>
<div style="left:175px;top:787px;width:1099px;height:111px;background:#a6bfe3"></div>
<div class="tab" style="left:245px;top:765px;width:102px;height:24px;border:0;border-radius:3px 3px 0 0;background:linear-gradient(#ece9d8,#b4caef)"></div>
<div style="left:245px;top:765px;width:1px;height:22px;background:#b8b6a4"></div>
<div style="left:347px;top:765px;width:1px;height:22px;background:#b8b6a4"></div>
<div style="left:458px;top:765px;width:1px;height:22px;background:#b8b6a4"></div>
<svg style="left:180px;top:767px" width="14" height="14" viewBox="0 0 14 14"><rect x="1" y="1" width="12" height="9" rx="1" fill="#dbe6f4" stroke="#3c5b86" stroke-width="1.500"/><path d="M3 4h7M3 6h5" stroke="#3c5b86"/><path d="M4 12h6" stroke="#3c5b86" stroke-width="2"/></svg>
<div class="t" style="left:197px;top:767px">Console</div>
<svg style="left:250px;top:768px" width="13" height="12" viewBox="0 0 13 12"><rect x=".5" y=".5" width="12" height="11" fill="#dfeaf6" stroke="#5a80b0"/><path d="M1 2.500h11" stroke="#5a80b0" stroke-width="2"/><path d="M6.500 4v7M3 6h2M3 8h2M8 6h3M8 8h3" stroke="#5a80b0"/></svg>
<div class="t" style="left:267px;top:767px">GEL Files</div>
<svg style="left:328px;top:767px" width="14" height="14"><use href="#x"/></svg>
<svg style="left:352px;top:767px" width="14" height="14" viewBox="0 0 14 14"><rect x=".5" y=".5" width="13" height="13" fill="#e6edf7" stroke="#224"/><path d="M1 2.500h12" stroke="#2b5fae" stroke-width="2"/><rect x="2" y="5" width="5" height="7" fill="#112"/><path d="M9 6h3M9 8h3M9 10h3" stroke="#36c"/></svg>
<div class="t" style="left:370px;top:767px">MMU Page Table</div>
<svg style="left:1241px;top:767px" width="12" height="8"><use href="#min"/></svg>
<svg style="left:1258px;top:767px" width="12" height="14"><use href="#max"/></svg>

<div class="g" style="left:177px;top:790px;width:407px;height:106px;border-top:1px solid #f7fbf7;border-left:1px solid #f7fbf7;box-sizing:border-box"></div>
<div style="left:182px;top:794px;width:395px;height:19px;background:#cbe7cf;border:1px solid #9eb2a5;box-shadow:inset 0 0 0 1px #f2f7f0;box-sizing:border-box"></div>
<div class="t" style="left:185px;top:797px;color:#8aa08e">type filter text</div>
<div style="left:195px;top:826px;height:60px;width:0;border-left:1px dotted #7f9a85"></div>
<div style="left:195px;top:825px;width:9px;border-top:1px dotted #7f9a85"></div>
<div style="left:195px;top:840px;width:9px;border-top:1px dotted #7f9a85"></div>
<div style="left:195px;top:855px;width:9px;border-top:1px dotted #7f9a85"></div>
<div style="left:195px;top:870px;width:9px;border-top:1px dotted #7f9a85"></div>
<div style="left:195px;top:885px;width:9px;border-top:1px dotted #7f9a85"></div>
<div style="left:204px;top:833px;width:61px;height:15px;background:#e9ecd9"></div>
<div class="t" style="left:205px;top:818px">Memory Map</div>
<div class="t" style="left:205px;top:833px">GEL Files</div>
<div class="t" style="left:205px;top:848px">ARM Advanced Features</div>
<div class="t" style="left:205px;top:863px">Generic Debugger Options</div>
<div class="t" style="left:205px;top:878px">Cortex A8 Disassembly Style Options</div>
<div style="left:561px;top:827px;width:15px;height:64px;background:#fbfaf7"></div>
<div class="sb" style="left:561px;top:819px;width:15px;height:16px"></div><svg style="left:561px;top:819px" width="15" height="16"><use href="#up"/></svg>
<div class="sb" style="left:561px;top:836px;width:15px;height:36px"></div>
<div style="left:565px;top:850px;width:7px;height:8px;background:repeating-linear-gradient(#f0f4ff 0 1px,#a8bbe0 1px 2px)"></div>
<div class="sb" style="left:561px;top:875px;width:15px;height:16px"></div><svg style="left:561px;top:875px" width="15" height="16"><use href="#dn"/></svg>

<div style="left:585px;top:790px;width:687px;height:106px;background:#ece9d8;border:1px solid #fbfbf8;box-sizing:border-box"></div>
<div class="t" style="left:596px;top:799px;font:bold 13.33px/16px 'Liberation Mono',monospace;letter-spacing:0">GEL Files (Cortex_A8)</div>
<svg style="left:774px;top:804px" width="15" height="15" viewBox="0 0 15 15"><circle cx="7.500" cy="7.500" r="6.500" fill="#eaf0f6" stroke="#4f6f8e"/><path d="M5.500 5.500a2 2 0 1 1 3 2c-1 .6-1 1-1 2M7.500 11v1.500" fill="none" stroke="#3a5f8e" stroke-width="1.300"/></svg>
<div style="left:592px;top:833px;width:674px;height:56px;border:1px solid #8fa5a8;box-sizing:border-box"></div>
<div style="left:593px;top:834px;width:672px;height:19px;background:#ece9d8"></div>
<div style="left:593px;top:852px;width:672px;height:2px;background:#d6d3c2"></div>
<div class="g" style="left:593px;top:854px;width:672px;height:34px"></div>
<div style="left:593px;top:871px;width:672px;height:1px;background:#e3f2e3"></div>
<div style="left:785px;top:835px;width:1px;height:17px;background:#c6c3b0"></div>
<div style="left:846px;top:835px;width:1px;height:17px;background:#c6c3b0"></div>
<div style="left:786px;top:854px;width:1px;height:34px;background:#e3f2e3"></div>
<div style="left:847px;top:854px;width:1px;height:34px;background:#e3f2e3"></div>
<div class="t" style="left:602px;top:837px">Script</div>
<div class="t" style="left:795px;top:837px">Status</div>
<svg style="left:598px;top:854px" width="16" height="16" viewBox="0 0 16 16"><path d="M.5.500h8l3 3v11H.5z" fill="#fff" stroke="#111"/><circle cx="5" cy="8" r="3.500" fill="#1c6aa8"/><path d="M8 13l6-8 1.500 1-6 8z" fill="#a88a30" stroke="#654"  stroke-width=".5"/></svg>
<div class="t" style="left:615px;top:855px">DM816x.gel</div>
<div class="t" style="left:790px;top:855px">Success</div>

<!-- status bar -->
<div class="grip" style="left:6px;top:905px;height:16px"></div>
<svg style="left:19px;top:906px" width="15" height="14" viewBox="0 0 15 14"><rect x=".5" y="2.500" width="6" height="11" fill="#f4f3ea" stroke="#6b7d96"/><path d="M1 3h5v2H1z" fill="#36c"/><path d="M11 0l1 2.500 2.500 1L12 4.500 11 7l-1-2.500L7.500 3.500 10 2.500z" fill="#e9c64a" stroke="#a88a20" stroke-width=".5"/></svg>
<svg style="left:48px;top:907px" width="11" height="14"><use href="#doc"/></svg>
<div class="t" style="left:52px;top:911px;font:bold 8px/8px 'Liberation Mono',monospace;letter-spacing:0">L</div>
<div class="grip" style="left:80px;top:905px;height:16px"></div>
<div class="t" style="left:90px;top:906px">Licensed</div>
<div class="grip" style="left:183px;top:905px;height:16px"></div>
<div class="t" style="left:193px;top:906px">THUMB</div>
<div class="sep" style="left:232px;top:903px;height:22px"></div>
<div class="t" style="left:241px;top:906px">LE</div>
<div class="sep" style="left:262px;top:903px;height:22px"></div>
<div class="t" style="left:271px;top:906px">SPV</div>
<div class="sep" style="left:298px;top:903px;height:22px"></div>
<div class="t" style="left:307px;top:906px">MMU Off</div>
<div class="grip" style="left:359px;top:905px;height:16px"></div>
<div class="grip" style="left:991px;top:905px;height:16px"></div>

<!-- taskbar strip -->
<div style="left:0;top:930px;width:1280px;height:4px;background:#2a62cf"></div>
<div style="left:0;top:930px;width:94px;height:4px;background:#3f9a4a"></div>
<div style="left:1166px;top:930px;width:114px;height:4px;background:#1f8fe0"></div>
</body></html>
